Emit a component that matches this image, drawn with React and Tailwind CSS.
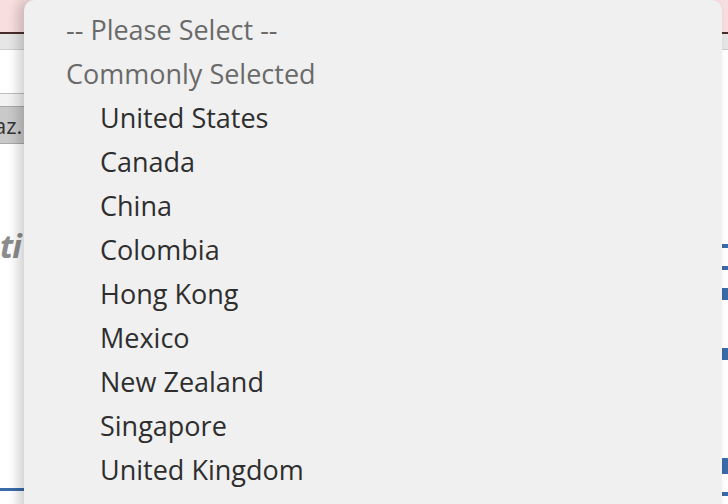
import React from 'react'

const countries = [
  'United States',
  'Canada',
  'China',
  'Colombia',
  'Hong Kong',
  'Mexico',
  'New Zealand',
  'Singapore',
  'United Kingdom',
]

function App() {
  return (
    <div className="relative w-[728px] h-[504px] overflow-hidden bg-white" style={{ fontFamily: '"Open Sans", "DejaVu Sans", sans-serif' }}>
      {/* page behind the menu */}
      <div className="h-[32px] bg-[#f8dede]" />
      <div className="h-[2px] bg-[#4a2c2c]" />
      <div className="h-[16px] bg-[#e6e6e6] border-b border-[#cfcfcf]" />
      <div className="flex justify-between">
        <div className="flex flex-col w-[24px]">
          <div className="h-[44px] bg-white border-b border-[#bdbdbd]" />
          <div className="h-[12px] bg-[#f2f2f2]" />
          <div className="h-[38px] bg-[#c9c9c9] border-y border-[#a9a9a9] flex items-center text-[22px] text-[#333] overflow-hidden">
            <span className="-ml-[6px]">az.</span>
          </div>
          <div className="h-[86px]" />
          <div className="text-[32px] font-bold italic text-[#8c8c8c] leading-none tracking-tight">ti</div>
          <div className="h-[226px]" />
          <div className="h-[3px] bg-[#3a6aa8]" />
        </div>
        <div className="flex flex-col w-[6px] pt-[194px] gap-[18px]">
          <div className="h-[4px] bg-[#3a6aa8]" />
          <div className="h-[4px] bg-[#3a6aa8]" />
          <div className="h-[12px] bg-[#3a6aa8]" />
          <div className="h-[12px] mt-[30px] bg-[#3a6aa8]" />
          <div className="h-[16px] mt-[80px] bg-[#3a6aa8]" />
          <div className="h-[4px] bg-[#3a6aa8]" />
        </div>
      </div>

      {/* dropdown menu */}
      <div className="absolute left-[24px] top-0 w-[698px] h-[520px] bg-[#f0f0f0] rounded-t-[10px] shadow-[-6px_0_12px_rgba(0,0,0,0.18)] pt-[8px] flex flex-col text-[27px] leading-[44px]">
        <div className="h-[44px] pl-[42px] text-[#6a6a6a]">-- Please Select --</div>
        <div className="h-[44px] pl-[42px] text-[#6a6a6a]">Commonly Selected</div>
        {countries.map((c) => (
          <div key={c} className="h-[44px] pl-[76px] text-[#2e2e2e]">{c}</div>
        ))}
        <div className="h-[44px] pl-[50px] text-[#2e2e2e]">·</div>
      </div>
    </div>
  )
}

export default App
